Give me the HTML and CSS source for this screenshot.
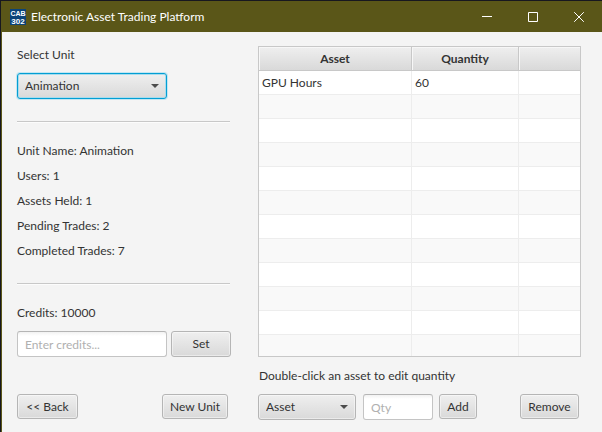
FILE: index.html
```html
<!DOCTYPE html>
<html lang="en">
<head>
<meta charset="utf-8">
<title>Electronic Asset Trading Platform</title>
<link rel="stylesheet" href="styles.css">
</head>
<body>
<div class="window">
  <header class="titlebar">
    <svg class="logo" viewBox="0 0 16 16" aria-hidden="true">
      <rect width="16" height="16" fill="#0b4479"/>
      <text x="8" y="7" text-anchor="middle">CAB</text>
      <text class="logo-number" x="8" y="15" text-anchor="middle">302</text>
    </svg>
    <h1 class="title">Electronic Asset Trading Platform</h1>
    <button class="winbtn" type="button" aria-label="Minimize"><svg viewBox="0 0 10 10"><path d="M0 .5H10" transform="translate(0 4)"/></svg></button>
    <button class="winbtn" type="button" aria-label="Maximize"><svg viewBox="0 0 10 10"><path d="M.5.5H9.5V9.5H.5Z"/></svg></button>
    <button class="winbtn" type="button" aria-label="Close"><svg viewBox="0 0 10 10"><path d="M.2.2L9.8 9.8M9.8.2L.2 9.8"/></svg></button>
  </header>
  <main class="content">
    <section class="unit">
      <label class="caption" for="unit">Select Unit</label>
      <div class="combo combo-unit">
        <select id="unit" class="focused"><option>Animation</option></select>
      </div>
      <hr>
      <ul class="facts">
        <li>Unit Name: Animation</li>
        <li>Users: 1</li>
        <li>Assets Held: 1</li>
        <li>Pending Trades: 2</li>
        <li>Completed Trades: 7</li>
      </ul>
      <hr>
      <label class="caption" for="credits">Credits: 10000</label>
      <div class="credits">
        <input id="credits" type="text" placeholder="Enter credits...">
        <button class="btn" type="button">Set</button>
      </div>
      <div class="actions">
        <button class="btn back" type="button">&lt;&lt; Back</button>
        <button class="btn new-unit" type="button">New Unit</button>
      </div>
    </section>
    <section class="assets">
      <div class="table-frame">
        <table>
          <colgroup><col class="col-asset"><col class="col-qty"><col></colgroup>
          <thead><tr><th>Asset</th><th>Quantity</th><th></th></tr></thead>
          <tbody>
            <tr><td>GPU Hours</td><td>60</td><td></td></tr>
            <tr><td></td><td></td><td></td></tr>
            <tr><td></td><td></td><td></td></tr>
            <tr><td></td><td></td><td></td></tr>
            <tr><td></td><td></td><td></td></tr>
            <tr><td></td><td></td><td></td></tr>
            <tr><td></td><td></td><td></td></tr>
            <tr><td></td><td></td><td></td></tr>
            <tr><td></td><td></td><td></td></tr>
            <tr><td></td><td></td><td></td></tr>
            <tr><td></td><td></td><td></td></tr>
            <tr class="partial"><td></td><td></td><td></td></tr>
          </tbody>
        </table>
      </div>
      <p class="hint">Double-click an asset to edit quantity</p>
      <div class="editor">
        <div class="combo combo-asset">
          <select aria-label="Asset"><option>Asset</option></select>
        </div>
        <input class="qty" type="text" placeholder="Qty" aria-label="Quantity">
        <button class="btn add" type="button">Add</button>
        <button class="btn remove" type="button">Remove</button>
      </div>
    </section>
  </main>
</div>
</body>
</html>
```
FILE: styles.css
```css
* { box-sizing: border-box; }

body {
  margin: 0;
  background: #f4f4f4;
  color: #333;
  font: 12px/16px Lato, "Open Sans", sans-serif;
}

button, input, select { font: inherit; color: inherit; margin: 0; }

.window {
  min-height: 100vh;
  border-top: 1px solid #17171f;
  border-left: 1px solid #17171f;
}

.titlebar {
  display: flex;
  align-items: center;
  height: 31px;
  padding-left: 9px;
  background: #5a5618;
  color: #fff;
}

.logo { width: 16px; height: 16px; }
.logo text { fill: #fff; font: bold 7px "Liberation Sans", sans-serif; }
.logo .logo-number { font-size: 8px; }

.title {
  flex: 1;
  margin: 0 0 0 5px;
  font-size: 12px;
  font-weight: 400;
  white-space: nowrap;
}

.winbtn {
  display: grid;
  place-items: center;
  width: 46px;
  height: 31px;
  padding: 0;
  border: 0;
  background: none;
}
.winbtn svg { width: 10px; height: 10px; fill: none; stroke: #fff; stroke-width: 1; }

.content {
  display: grid;
  grid-template-columns: 214px 1fr;
  column-gap: 27px;
  padding: 14px 21px 13px 15px;
  border-left: 1px solid #5a5618;
}

.unit, .assets { display: flex; flex-direction: column; }

.caption { margin-bottom: 10px; }
.unit > .caption:first-child { margin-top: 1px; }

.combo { position: relative; height: 26px; }
.combo::after {
  content: "";
  position: absolute;
  top: 11px;
  right: 8px;
  border: 4px solid transparent;
  border-top-color: #4c4c4c;
  border-bottom: 0;
  pointer-events: none;
}
.combo-unit { width: 150px; }
.combo-asset { width: 98px; }

select, .btn {
  border: 1px solid #b5b5b5;
  border-radius: 3px;
  background: linear-gradient(#efefef, #d9d9d9);
  box-shadow: inset 0 0 0 1px rgba(255, 255, 255, .45);
}

select {
  appearance: none;
  width: 100%;
  height: 26px;
  padding: 0 7px;
  outline: 0;
}
select.focused {
  border-color: #039ed3;
  box-shadow: 0 0 0 1px #c3e6f2, inset 0 0 0 1px #a9dced;
}

.btn { height: 25px; padding: 0 6px; white-space: nowrap; }

input {
  height: 26px;
  min-width: 0;
  padding: 0 7px;
  border: 1px solid #c4c4c4;
  border-top-color: #b5b5b5;
  border-radius: 3px;
  background: linear-gradient(#f2f2f2, #fff 4px);
}
input::placeholder { color: #b0b0b0; opacity: 1; }

hr {
  width: 213px;
  height: 2px;
  margin: 22px 0 20px;
  border: 0;
  border-top: 1px solid #c8c8c8;
  background: #fcfcfc;
}

.facts {
  display: grid;
  row-gap: 9px;
  margin: 0;
  padding: 0;
  list-style: none;
}
.facts + hr { margin-top: 24px; }

.credits { display: grid; grid-template-columns: 150px 60px; column-gap: 4px; }
.credits .btn { height: 26px; }

.actions {
  display: flex;
  justify-content: space-between;
  margin-top: 37px;
  padding-right: 3px;
}
.back { width: 61px; }
.new-unit { width: 66px; }

.table-frame { border: 1px solid #c8c8c8; background: #fff; }

table {
  width: 100%;
  border-collapse: separate;
  border-spacing: 0;
  table-layout: fixed;
}
.col-asset { width: 153px; }
.col-qty { width: 107px; }

th, td { height: 24px; padding: 0 3px; border-right: 1px solid #ededed; }
th {
  border-right-color: #c8c8c8;
  border-bottom: 1px solid #c8c8c8;
  background: linear-gradient(#efefef, #d9d9d9);
  box-shadow: inset 1px 1px 0 #f7f7f7;
  font-weight: 700;
}
td { border-bottom: 1px solid #ededed; }
th:last-child, td:last-child { border-right: 0; }
tbody tr:nth-child(even) { background: #f9f9f9; }
.partial td { height: 21px; border-bottom: 0; }

.hint { margin: 11px 0 10px 1px; }

.editor { display: flex; padding-right: 2px; }
.qty { width: 70px; margin: 0 6px 0 7px; }
.add { width: 38px; }
.remove { width: 59px; margin-left: auto; }
```
